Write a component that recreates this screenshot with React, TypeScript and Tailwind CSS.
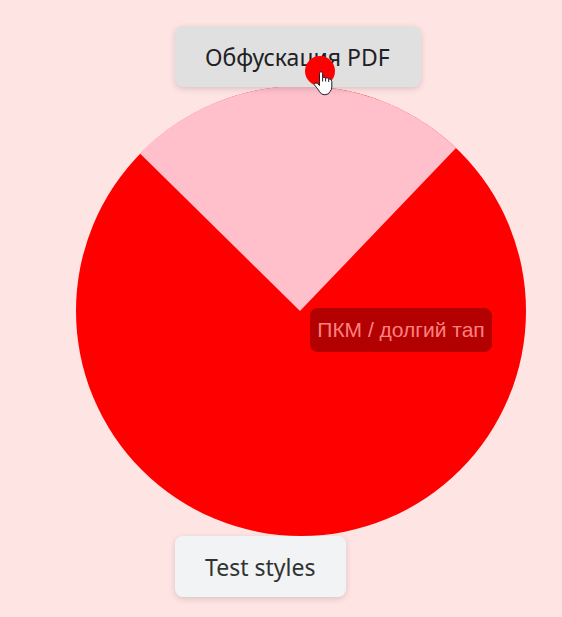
import React from "react";

const buttonBase =
  "relative z-10 flex h-[61px] w-fit items-center rounded-lg pt-0.5 pr-[31px] pl-[30px] font-['Noto_Sans','Open_Sans',sans-serif] text-[23px] whitespace-nowrap shadow-[0_2px_6px_rgba(0,0,0,0.15)]";

function Pointer() {
  return (
    <span className="pointer-events-none absolute top-[30px] left-[130px] z-20 size-[30px] rounded-full bg-[#ff0000]">
      <svg className="absolute top-3.5 left-2 h-[26px] w-5" viewBox="0 0 20 26" aria-hidden="true">
        <path
          d="M6.5 15.5V3.5Q6.5 1.6 8 1.6Q9.6 1.6 9.6 3.5V7.5Q11 6.6 12.6 8Q14.2 7.2 15.7 8.8Q18.8 8.6 18.8 11.5V17Q18.8 19.5 17.3 21.2Q16 24.8 11.8 24.8Q8.2 24.8 6.6 21.8Q5.2 19.6 3.8 17.8L1.2 14.6Q1.2 12.8 3 12.9Q4.6 13 6.5 15.5Z"
          fill="#fff"
          stroke="#20202b"
          strokeWidth="1"
          strokeLinejoin="round"
        />
        <path d="M9.6 7.5V11.5M12.6 8V11.5M15.7 8.8V12" fill="none" stroke="#20202b" strokeWidth="1" />
      </svg>
    </span>
  );
}

export default function App() {
  return (
    <main className="flex min-h-screen justify-center bg-[#ffe4e4] pt-[26px] pb-5 pl-10">
      <div className="flex w-[450px] flex-col">
        <div className="relative z-10 ml-[99px] w-fit">
          <button type="button" className={`${buttonBase} bg-[#e0e0e0] text-[#202124]`}>
            Обфускация PDF
          </button>
          <Pointer />
        </div>
        <div className="relative -mt-px">
          <svg className="block w-full" viewBox="0 0 450 450" aria-hidden="true">
            <circle cx="225" cy="225" r="225" fill="#ff0000" />
            <path d="M224 225L64 67.5A225 225 0 0 1 380 62Z" fill="#ffc0cb" />
          </svg>
          <div
            role="tooltip"
            className="absolute top-[222px] left-[234px] flex h-11 w-[182px] items-center justify-center rounded-lg bg-[#b30000] font-['Liberation_Sans',Arial,sans-serif] text-[21px] whitespace-nowrap text-[#ff8080]"
          >
            ПКМ / долгий тап
          </div>
        </div>
        <button type="button" className={`${buttonBase} ml-[99px] bg-[#f2f3f5] text-[#303331]`}>
          Test styles
        </button>
      </div>
    </main>
  );
}
